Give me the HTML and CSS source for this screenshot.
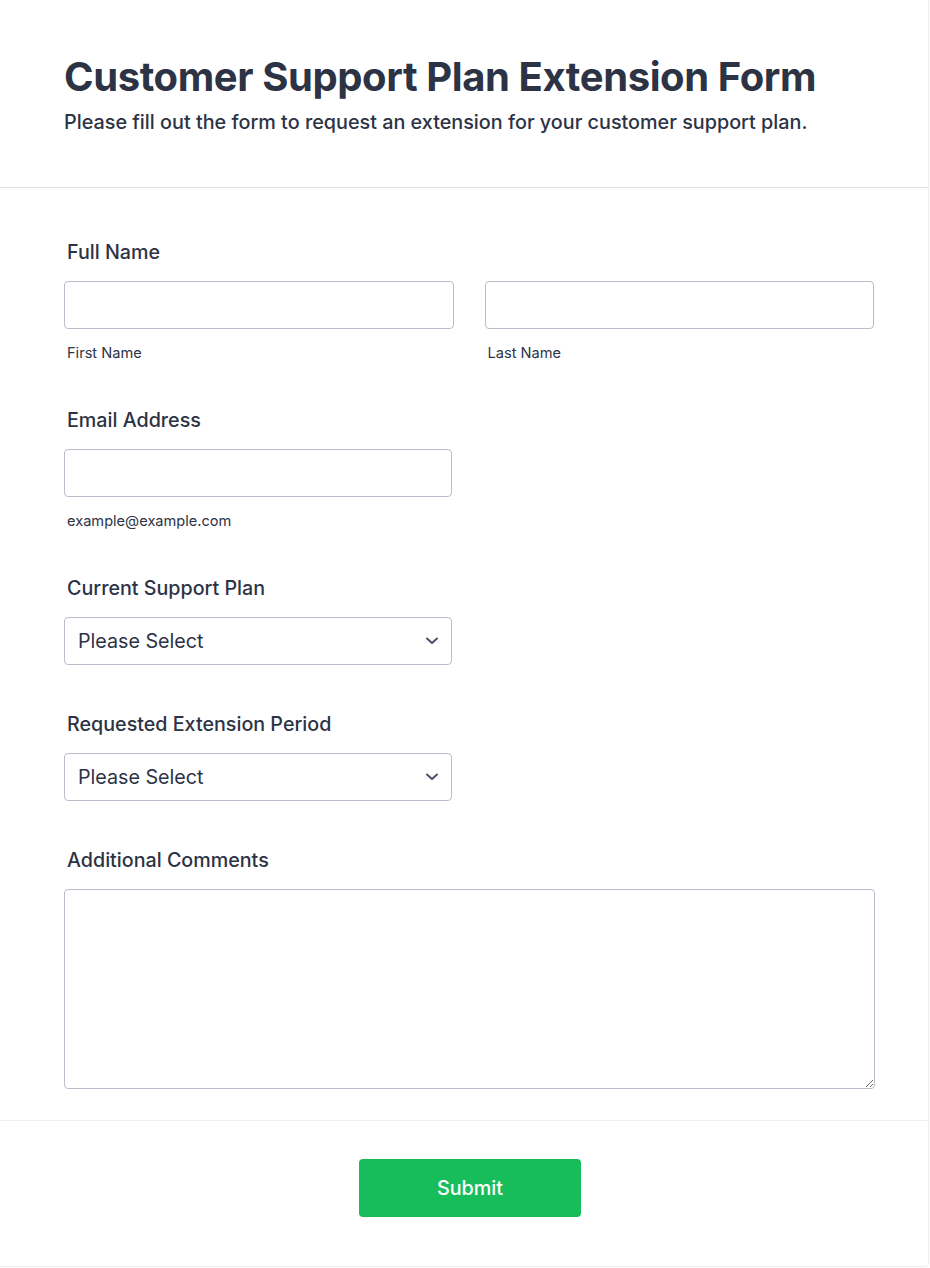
FILE: index.html
```html
<!DOCTYPE html>
<html lang="en">
<head>
<meta charset="utf-8">
<title>Customer Support Plan Extension Form</title>
<link rel="stylesheet" href="styles.css">
</head>
<body>
<form class="card">
  <header class="header">
    <h1 class="title">Customer Support Plan Extension Form</h1>
    <p class="subtitle">Please fill out the form to request an extension for your customer support plan.</p>
  </header>
  <div class="fields">
    <div class="field">
      <label class="label">Full Name</label>
      <div class="row">
        <div class="col">
          <input class="input" type="text">
          <span class="sublabel">First Name</span>
        </div>
        <div class="col">
          <input class="input" type="text">
          <span class="sublabel">Last Name</span>
        </div>
      </div>
    </div>
    <div class="field">
      <label class="label">Email Address</label>
      <div class="col half">
        <input class="input" type="email">
        <span class="sublabel">example@example.com</span>
      </div>
    </div>
    <div class="field plain">
      <label class="label">Current Support Plan</label>
      <div class="select half">
        <span class="select-text">Please Select</span>
        <svg class="chevron" width="14" height="10" viewBox="0 0 14 10"><path d="M2 2.5 L7 7 L12 2.5" fill="none" stroke="#4b5168" stroke-width="2" stroke-linecap="round" stroke-linejoin="round"/></svg>
      </div>
    </div>
    <div class="field plain">
      <label class="label">Requested Extension Period</label>
      <div class="select half">
        <span class="select-text">Please Select</span>
        <svg class="chevron" width="14" height="10" viewBox="0 0 14 10"><path d="M2 2.5 L7 7 L12 2.5" fill="none" stroke="#4b5168" stroke-width="2" stroke-linecap="round" stroke-linejoin="round"/></svg>
      </div>
    </div>
    <div class="field last">
      <label class="label">Additional Comments</label>
      <textarea class="textarea"></textarea>
    </div>
  </div>
  <footer class="footer">
    <button class="submit" type="button">Submit</button>
  </footer>
</form>
</body>
</html>
```

FILE: styles.css
```css
html, body {
  margin: 0;
  padding: 0;
  background: #ffffff;
}
body {
  font-family: Inter, "Noto Sans", sans-serif;
  color: #2c3345;
}
.card {
  width: 929px;
  box-sizing: border-box;
  background: #ffffff;
  border-right: 1px solid #ececf2;
  border-bottom: 1px solid #ececf2;
  border-bottom-right-radius: 4px;
  display: flex;
  flex-direction: column;
}
.header {
  padding: 53px 64px 0 64px;
  height: 188px;
  box-sizing: border-box;
  border-bottom: 1px solid #dcdde8;
}
.title {
  margin: 0;
  font-size: 40px;
  line-height: 48px;
  font-weight: 700;
  letter-spacing: -0.4px;
  color: #2c3345;
}
.subtitle {
  margin: 8px 0 0 0;
  font-size: 19.8px;
  line-height: 26px;
  font-weight: 500;
  color: #2c3345;
}
.fields {
  padding: 50px 54px 31px 64px;
  display: flex;
  flex-direction: column;
  gap: 43px;
}
.field {
  display: flex;
  flex-direction: column;
}
.field.plain {
  margin-bottom: 2px;
}
.label {
  font-size: 19.7px;
  line-height: 28px;
  font-weight: 500;
  padding-left: 3px;
  margin-bottom: 15px;
  color: #2c3345;
}
.row {
  display: flex;
  gap: 31px;
}
.col {
  display: flex;
  flex-direction: column;
  width: 390px;
}
.col.half {
  width: 388px;
}
.input {
  height: 48px;
  box-sizing: border-box;
  border: 1px solid #b8bdc9;
  border-radius: 4px;
  background: #fff;
  font-family: inherit;
  font-size: 16px;
  padding: 0 12px;
  margin: 0;
}
.sublabel {
  margin-top: 14px;
  font-size: 14.6px;
  line-height: 20px;
  padding-left: 3px;
  color: #2c3345;
}
.select {
  width: 388px;
  height: 48px;
  box-sizing: border-box;
  border: 1px solid #b8bdc9;
  border-radius: 4px;
  display: flex;
  align-items: center;
  justify-content: space-between;
  padding: 0 12px 0 13px;
}
.select-text {
  font-size: 19.7px;
  color: #2c3345;
}
.chevron {
  display: block;
}
.textarea {
  width: 811px;
  height: 200px;
  box-sizing: border-box;
  border: 1px solid #b8bdc9;
  border-radius: 4px;
  font-family: inherit;
  margin: 0;
  resize: vertical;
}
.footer {
  border-top: 1px solid #efeff4;
  display: flex;
  justify-content: center;
  padding: 38px 0 49px 0;
}
.submit {
  width: 222px;
  height: 58px;
  margin-left: 12px;
  background: #18bd5b;
  border: none;
  border-radius: 4px;
  color: #ffffff;
  font-family: inherit;
  font-size: 19.8px;
  font-weight: 500;
}
```
